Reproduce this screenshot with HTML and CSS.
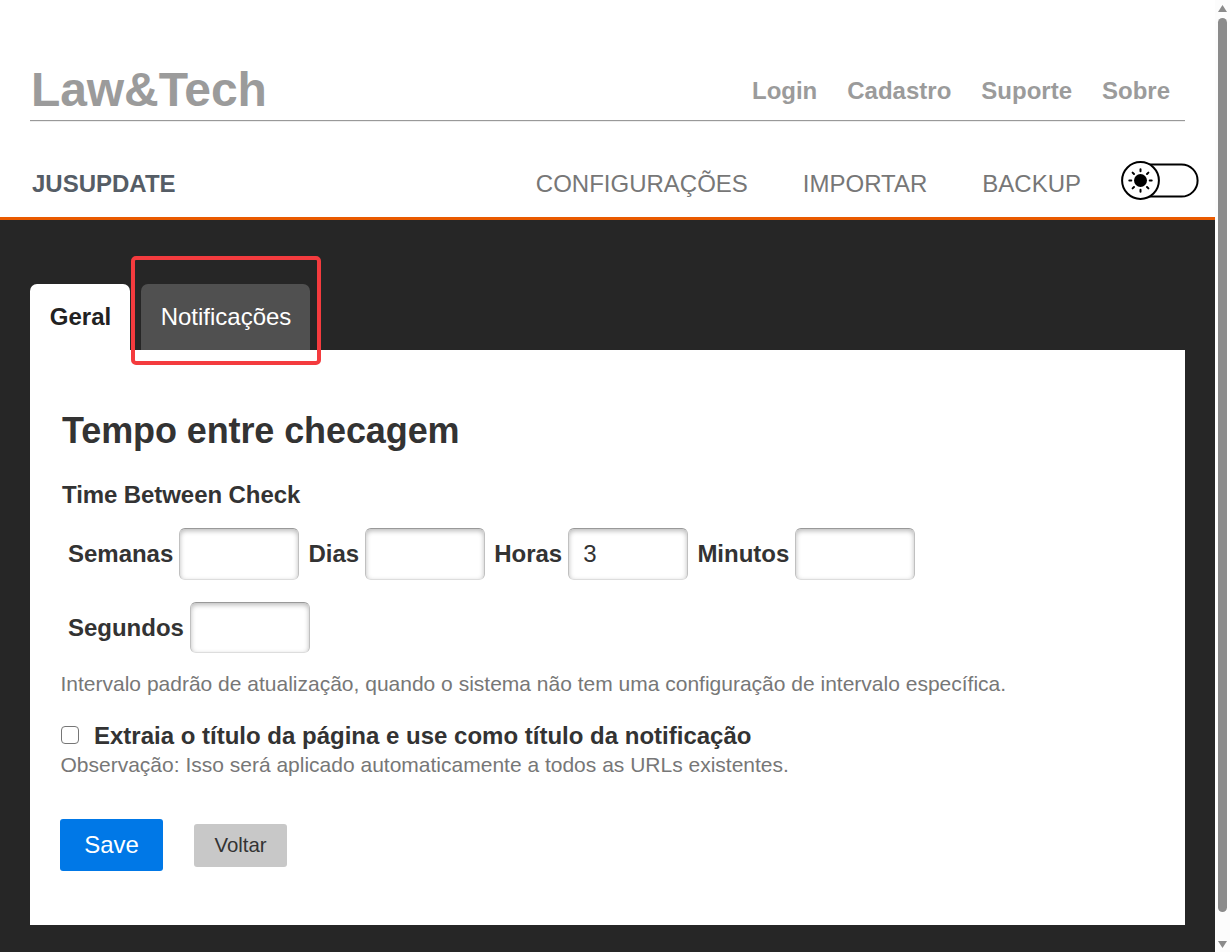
FILE: index.html
```html
<!DOCTYPE html>
<html lang="pt-BR">
<head>
<meta charset="utf-8">
<title>Law&amp;Tech - JusUpdate</title>
<link rel="stylesheet" href="styles.css">
</head>
<body>
<div class="window">
<div class="page">
  <header class="site-header">
    <div class="brand">Law&amp;Tech</div>
    <nav class="site-nav"><a>Login</a><a>Cadastro</a><a>Suporte</a><a>Sobre</a></nav>
  </header>
  <div class="menu">
    <strong class="app-name">JUSUPDATE</strong>
    <nav class="menu-links"><a>CONFIGURAÇÕES</a><a>IMPORTAR</a><a>BACKUP</a></nav>
    <svg class="toggle" width="80" height="40" viewBox="0 0 80 40" fill="none" stroke="#000" stroke-width="2">
      <path d="M20 4.4H61.5a16.1 16.1 0 0 1 0 32.2H20"/>
      <circle cx="20.5" cy="20.5" r="18.4" fill="#fff"/>
      <circle cx="20.5" cy="20.5" r="6.5" fill="#000" stroke="none"/>
      <path stroke-linecap="round" d="M20.5 9.3v2M20.5 29.7v2M9.3 20.5h2M29.7 20.5h2M12.6 12.6l1.4 1.4M27 27l1.4 1.4M28.4 12.6L27 14M14 27l-1.4 1.4"/>
    </svg>
  </div>
  <main class="content">
    <div class="tabs">
      <a class="tab active">Geral</a>
      <a class="tab second">Notificações<span class="highlight"></span></a>
    </div>
    <form class="panel">
      <h1>Tempo entre checagem</h1>
      <div class="legend">Time Between Check</div>
      <div class="fields">
        <label>Semanas<input type="text"></label>
        <label>Dias<input type="text"></label>
        <label>Horas<input type="text" value="3"></label>
        <label>Minutos<input type="text"></label>
      </div>
      <div class="fields last">
        <label>Segundos<input type="text"></label>
      </div>
      <p class="help interval">Intervalo padrão de atualização, quando o sistema não tem uma configuração de intervalo específica.</p>
      <label class="check"><input type="checkbox"><span>Extraia o título da página e use como título da notificação</span></label>
      <p class="help note">Observação: Isso será aplicado automaticamente a todos as URLs existentes.</p>
      <div class="actions"><button type="button" class="save">Save</button><button type="button" class="back">Voltar</button></div>
    </form>
  </main>
</div>
<div class="scrollbar">
  <svg width="9" height="7" viewBox="0 0 9 7"><path d="M4.5 0L9 7H0z" fill="#8b8b8b"/></svg>
  <div class="thumb"></div>
  <svg width="9" height="7" viewBox="0 0 9 7"><path d="M0 0h9L4.5 7z" fill="#8b8b8b"/></svg>
</div>
</div>
</body>
</html>
```

FILE: styles.css
```css
* { box-sizing: border-box; }
body { margin: 0; font: 24px/30px "Liberation Sans", Arial, sans-serif; color: #333; overflow: hidden; }
.window { display: flex; height: 952px; }
.page { flex: 1; display: flex; flex-direction: column; background: #fff; }
.site-header { display: flex; justify-content: space-between; align-items: flex-start; height: 121px; margin: 0 30px; padding: 60px 15px 0 1px; border-bottom: 1px solid #999; box-shadow: 0 1px 0 #eee; color: #9b9b9b; font-weight: bold; }
.brand { font-size: 48px; line-height: 60px; letter-spacing: -0.08px; }
.site-nav { display: flex; gap: 30px; padding-top: 16px; }
.menu { display: flex; height: 99px; padding: 48px 15px 0 32px; border-bottom: 3px solid #e95a00; color: #777; }
.app-name { color: #555d66; }
.menu-links { display: flex; gap: 55px; margin-left: auto; }
.toggle { margin: -9px 0 0 39px; }
.content { flex: 1; background: #262626; padding: 64px 30px 0; }
.tabs { display: flex; gap: 11px; height: 66px; }
.tab { position: relative; width: 100px; padding: 18px 0 0 1px; border-radius: 7px 7px 0 0; background: #fff; color: #222; text-align: center; font-weight: bold; }
.second { width: 169px; background: #505050; color: #fff; font-weight: normal; }
.highlight { position: absolute; left: -10px; top: -28px; width: 190px; height: 109px; border: 4px solid #f43b3e; border-radius: 5px; }
.panel { height: 575px; background: #fff; padding: 57px 30px 0; }
h1 { margin: 0 0 25px 2px; font-size: 36px; line-height: 48px; letter-spacing: -0.1px; }
.legend { margin: 0 0 18px 2px; font-weight: bold; letter-spacing: -0.08px; }
.fields { display: flex; gap: 9.2px; padding-left: 8px; height: 74px; font-weight: bold; }
.fields label { display: flex; align-items: center; gap: 6px; height: 52px; letter-spacing: -0.02px; }
.fields input { width: 120px; height: 52px; padding: 0 14px; border: 1px solid #ccc; border-color: #999 #c0c0c0 #ddd; border-radius: 6px; box-shadow: inset 0 2px 5px #bbb; font: 24px "Liberation Sans", Arial, sans-serif; color: #333; }
.last { height: 67px; }
.last input { height: 51px; margin-bottom: 1px; }
.help { margin: 0 0 0 0.5px; color: #777; font-size: 21px; line-height: 30px; }
.check { display: flex; margin-top: 22px; font-weight: bold; }
.check input { appearance: none; width: 18px; height: 18px; margin: 5px 15px 0 1px; border: 1.5px solid #767676; border-radius: 4px; background: #fff; }
.note { margin-top: -1px; }
.actions { display: flex; align-items: center; gap: 31px; margin-top: 39px; }
button { border: 0; border-radius: 3px; padding: 0; font: 24px "Liberation Sans", Arial, sans-serif; }
.save { width: 103px; height: 52px; background: #0078e7; color: #fff; }
.back { width: 93px; height: 43px; background: #c8c8c8; color: #333; font-size: 20.4px; }
.scrollbar { width: 15px; padding: 5px 3px 4px; background: #fcfcfc; display: flex; flex-direction: column; align-items: center; }
.scrollbar svg:last-child { margin-top: auto; }
.thumb { width: 9px; height: 894px; margin-top: 6px; border-radius: 5px; background: #8b8b8b; }
```
